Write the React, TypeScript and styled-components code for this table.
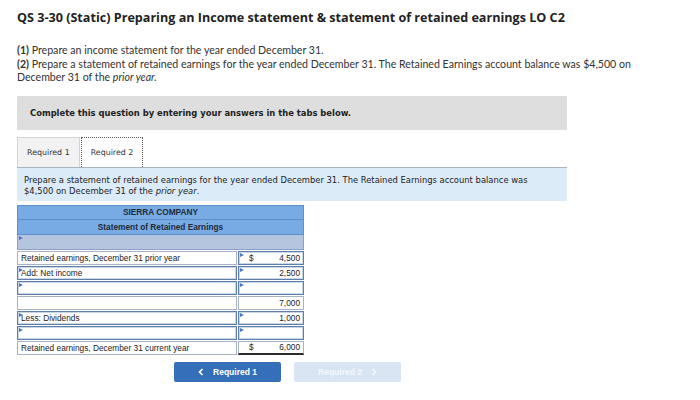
import { Fragment } from "react";
import styled, { createGlobalStyle, css } from "styled-components";

const GlobalStyle = createGlobalStyle`
  html, body {
    margin: 0;
    padding: 0;
    background: #ffffff;
  }
`;

const Page = styled.div`
  width: 700px;
  height: 400px;
  padding: 10px 17px 0 17px;
  box-sizing: border-box;
  overflow: hidden;
  font-family: "Lato", "Open Sans", sans-serif;
  color: #333333;
`;

const Title = styled.h1`
  margin: 0;
  font-family: "Open Sans", "Lato", sans-serif;
  font-size: 12.6px;
  font-weight: 700;
  color: #222222;
  line-height: 16px;
`;

const Instructions = styled.div`
  margin-top: 18px;
  width: 620px;
  font-size: 10.6px;
  line-height: 13.5px;
  color: #333333;

  b {
    font-weight: 700;
  }
`;

const CompleteBox = styled.div`
  margin-top: 11px;
  width: 550px;
  height: 34px;
  background: #dedede;
  display: flex;
  align-items: center;
  padding-left: 13px;
  box-sizing: border-box;
  font-family: "DejaVu Sans", Verdana, sans-serif;
  font-size: 8.4px;
  font-weight: 700;
  color: #222222;
`;

const TabBar = styled.div`
  margin-top: 7px;
  display: flex;
  align-items: flex-end;
  height: 30px;
`;

const Tab = styled.div<{ $active?: boolean }>`
  height: 30px;
  box-sizing: border-box;
  display: flex;
  align-items: center;
  padding: 0 9px;
  font-family: "DejaVu Sans", Verdana, sans-serif;
  font-size: 7.9px;
  color: #333333;
  ${(p) =>
    p.$active
      ? css`
          background: #ffffff;
          border: 1px dotted #555555;
          border-bottom: none;
          margin-left: 1px;
        `
      : css`
          background: #f2f2f2;
          border: 1px solid #d4d4d4;
          border-bottom: none;
        `}
`;

const Prompt = styled.div`
  width: 550px;
  height: 34px;
  box-sizing: border-box;
  background: #dcebf8;
  border-top: 1px solid #a8b4c0;
  padding: 7px 7px 0 7px;
  font-family: "DejaVu Sans", Verdana, sans-serif;
  font-size: 8.4px;
  line-height: 11px;
  color: #222222;
`;

const Sheet = styled.div`
  margin-top: 4px;
  width: 287px;
  display: grid;
  grid-template-columns: 220px 66px;
  column-gap: 1px;
  font-family: "Liberation Sans", Arial, sans-serif;
  font-size: 8.3px;
  color: #222222;
`;

const HeaderCell = styled.div<{ $first?: boolean }>`
  grid-column: 1 / span 2;
  height: 15px;
  box-sizing: border-box;
  background: #78abe3;
  border: 1px solid #5d8fcb;
  border-top: ${(p) => (p.$first ? "1px solid #5d8fcb" : "none")};
  display: flex;
  align-items: center;
  justify-content: center;
  font-weight: 700;
  color: #1e2a3a;
`;

const SpacerRow = styled.div`
  grid-column: 1 / span 2;
  position: relative;
  height: 15px;
  box-sizing: border-box;
  background: #b6c5df;
  border: 1px solid #8aa0c4;
  border-top: none;
  margin-bottom: 1px;
`;

const Marker = styled.span`
  position: absolute;
  left: 1px;
  top: 1px;
  width: 0;
  height: 0;
  border-top: 2.5px solid transparent;
  border-bottom: 2.5px solid transparent;
  border-left: 4px solid #4a78b8;
`;

const Cell = styled.div<{ $input?: boolean; $total?: boolean }>`
  position: relative;
  height: 14px;
  margin-bottom: 1px;
  box-sizing: border-box;
  background: #ffffff;
  display: flex;
  align-items: center;
  padding: 0 3px;
  border: 1px solid ${(p) => (p.$input ? "#5f7fa8" : "#a7b3c2")};
  ${(p) =>
    p.$input &&
    css`
      box-shadow: inset 0 0 0 1px #c9d6e6;
    `}
  ${(p) =>
    p.$total &&
    css`
      border-bottom: 2px solid #2a2a2a;
    `}
`;

const Amount = styled.div`
  display: flex;
  width: 100%;
  justify-content: space-between;
  padding-left: 7px;
  box-sizing: border-box;
`;

const Buttons = styled.div`
  margin-top: 6px;
  margin-left: 157px;
  display: flex;
  gap: 13px;
`;

const NavButton = styled.div<{ $disabled?: boolean }>`
  width: 107px;
  height: 20px;
  border-radius: 2px;
  display: flex;
  align-items: center;
  justify-content: center;
  gap: 9px;
  font-family: "Liberation Sans", Arial, sans-serif;
  font-size: 8.5px;
  font-weight: 700;
  color: ${(p) => (p.$disabled ? "#f4f7fb" : "#ffffff")};
  background: ${(p) => (p.$disabled ? "#dae5f3" : "#356fb9")};
`;

const Chevron = ({ dir }: { dir: "left" | "right" }) => (
  <svg width="6" height="8" viewBox="0 0 6 8">
    <path
      d={dir === "left" ? "M4.5 1 L1.5 4 L4.5 7" : "M1.5 1 L4.5 4 L1.5 7"}
      fill="none"
      stroke="currentColor"
      strokeWidth="1.6"
    />
  </svg>
);

type Row = {
  label: string;
  dollar?: boolean;
  value: string;
  labelInput?: boolean;
  valueInput?: boolean;
  total?: boolean;
};

const rows: Row[] = [
  { label: "Retained earnings, December 31 prior year", dollar: true, value: "4,500", valueInput: true },
  { label: "Add: Net income", value: "2,500", labelInput: true, valueInput: true },
  { label: "", value: "", labelInput: true, valueInput: true },
  { label: "", value: "7,000" },
  { label: "Less: Dividends", value: "1,000", labelInput: true, valueInput: true },
  { label: "", value: "", labelInput: true, valueInput: true },
  { label: "Retained earnings, December 31 current year", dollar: true, value: "6,000", total: true },
];

export default function App() {
  return (
    <>
      <GlobalStyle />
      <Page>
        <Title>
          QS 3-30 (Static) Preparing an Income statement &amp; statement of retained earnings LO C2
        </Title>
        <Instructions>
          <div>
            <b>(1)</b> Prepare an income statement for the year ended December 31.
          </div>
          <div>
            <b>(2)</b> Prepare a statement of retained earnings for the year ended December 31. The Retained
            Earnings account balance was $4,500 on December 31 of the <i>prior year.</i>
          </div>
        </Instructions>
        <CompleteBox>Complete this question by entering your answers in the tabs below.</CompleteBox>
        <TabBar>
          <Tab>Required 1</Tab>
          <Tab $active>Required 2</Tab>
        </TabBar>
        <Prompt>
          Prepare a statement of retained earnings for the year ended December 31. The Retained Earnings account
          balance was
          <br />
          $4,500 on December 31 of the <i>prior year</i>.
        </Prompt>
        <Sheet>
          <HeaderCell $first>SIERRA COMPANY</HeaderCell>
          <HeaderCell>Statement of Retained Earnings</HeaderCell>
          <SpacerRow>
            <Marker />
          </SpacerRow>
          {rows.map((r, i) => (
            <Fragment key={i}>
              <Cell $input={r.labelInput}>
                {r.labelInput && <Marker />}
                {r.label}
              </Cell>
              <Cell $input={r.valueInput} $total={r.total}>
                {r.valueInput && <Marker />}
                <Amount>
                  <span>{r.dollar ? "$" : ""}</span>
                  <span>{r.value}</span>
                </Amount>
              </Cell>
            </Fragment>
          ))}
        </Sheet>
        <Buttons>
          <NavButton>
            <Chevron dir="left" />
            Required 1
          </NavButton>
          <NavButton $disabled>
            Required 2
            <Chevron dir="right" />
          </NavButton>
        </Buttons>
      </Page>
    </>
  );
}
